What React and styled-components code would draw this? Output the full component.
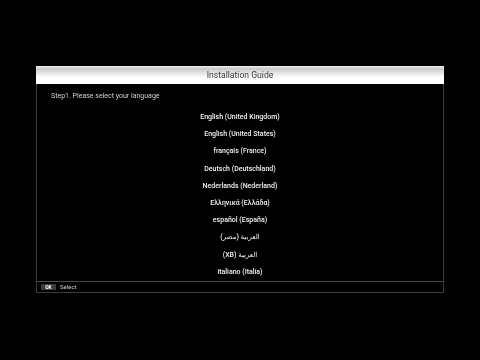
import React from "react";
import styled, { createGlobalStyle } from "styled-components";

const Global = createGlobalStyle`
  html, body { margin: 0; padding: 0; background: #000; }
  body { width: 480px; height: 360px; overflow: hidden; font-family: Roboto, "Noto Sans", "DejaVu Sans", sans-serif; }
`;

const Screen = styled.div`
  width: 480px;
  height: 360px;
  background: #000;
  padding: 66px 36px 0;
  box-sizing: border-box;
  filter: grayscale(1);
`;

const Panel = styled.div`
  width: 408px;
  height: 227px;
  box-sizing: border-box;
  border: 1px solid #3c3c3c;
  border-top: none;
  display: flex;
  flex-direction: column;
  background: #000;
`;

const Header = styled.div`
  height: 18px;
  flex: none;
  margin: 0 -1px;
  background: linear-gradient(#f2f2f2 0%, #c9c9c9 15%, #e6e6e6 40%, #ffffff 65%, #ffffff 100%);
  color: #3a3a3a;
  font-size: 8.6px;
  line-height: 19px;
  text-align: center;
`;

const Body = styled.div`
  flex: 1;
  overflow: hidden;
  padding: 7px 0 0 14px;
`;

const Step = styled.div`
  color: #d0d0d0;
  font-size: 7px;
  line-height: 10px;
  margin-bottom: 12px;
`;

const List = styled.div`
  display: flex;
  flex-direction: column;
  align-items: center;
  margin-left: -14px;
`;

const Item = styled.div`
  color: #f2f2f2;
  font-size: 7px;
  font-weight: 500;
  height: 17.2px;
  line-height: 8px;
  white-space: nowrap;
  unicode-bidi: plaintext;
`;

const Footer = styled.div`
  height: 10px;
  flex: none;
  border-top: 1px solid #4a4a4a;
  display: flex;
  align-items: center;
  padding-left: 4px;
  gap: 4px;
`;

const Key = styled.span`
  display: inline-block;
  width: 15px;
  height: 6px;
  background: #3a3a3a;
  color: #fff;
  font-size: 5px;
  font-weight: 700;
  line-height: 6px;
  text-align: center;
`;

const KeyLabel = styled.span`
  color: #cfcfcf;
  font-size: 6px;
  line-height: 10px;
`;

const languages = [
  "English (United Kingdom)",
  "English (United States)",
  "français (France)",
  "Deutsch (Deutschland)",
  "Nederlands (Nederland)",
  "Ελληνικά (Ελλάδα)",
  "español (España)",
  "العربية (مصر)",
  "العربية (XB)",
  "italiano (Italia)",
];

export default function App() {
  return (
    <>
      <Global />
      <Screen>
        <Panel>
          <Header>Installation Guide</Header>
          <Body>
            <Step>Step1. Please select your language</Step>
            <List>
              {languages.map((l) => (
                <Item key={l}>{l}</Item>
              ))}
            </List>
          </Body>
          <Footer>
            <Key>OK</Key>
            <KeyLabel>Select</KeyLabel>
          </Footer>
        </Panel>
      </Screen>
    </>
  );
}
